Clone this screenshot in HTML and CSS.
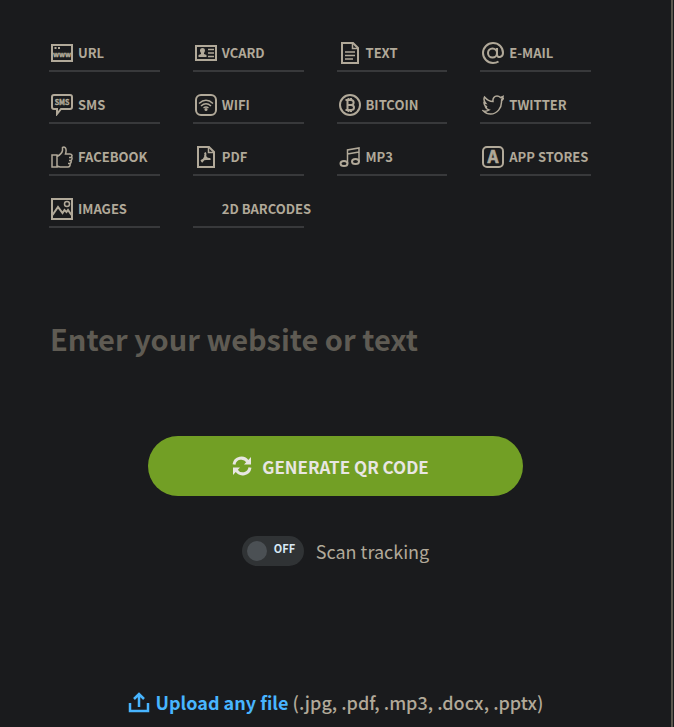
FILE: index.html
```html
<!DOCTYPE html>
<html lang="en">
<head>
  <meta charset="UTF-8">
  <meta name="viewport" content="width=device-width, initial-scale=1.0">
  <title>QR Code Generator</title>
  <link rel="stylesheet" href="styles.css">
</head>
<body>
  <main class="generator">
    <nav class="types">
      <a href="#url" class="type">
        <svg class="icon" viewBox="0 0 22 22"><path d="M1 3h20v16H1z"/><path d="M3.500 6h2M7 6h2"/><text x="11" y="15" class="icon-text www">www</text></svg>
        URL
      </a>
      <a href="#vcard" class="type">
        <svg class="icon" viewBox="0 0 22 22"><path d="M1 4h20v14H1z"/><path class="thin" d="M13 7.500h6M13 11h6M13 14.500h6"/><path class="solid" d="M7.500 6c3 0 3 3.500 1.500 5v1l2.500 1v2h-8v-2l2.500-1v-1c-1.500-1.500-1.500-5 1.500-5z"/></svg>
        VCARD
      </a>
      <a href="#text" class="type">
        <svg class="icon" viewBox="0 0 22 22"><path d="M3 1h11l5 5v15H3z"/><path class="thin" d="M13.500 1v5.500H19M6 10h10M6 13.500h10M6 17h8"/></svg>
        TEXT
      </a>
      <a href="#email" class="type">
        <svg class="icon" viewBox="0 0 22 22"><circle cx="10.500" cy="11" r="4.500"/><path d="M15 6v6.500c0 4 6 3 6-1.500 0-6-4.500-10-10-10S1 5.500 1 11s4.500 10 10 10c2.500 0 4-.500 5.500-1.500"/></svg>
        E-MAIL
      </a>
      <a href="#sms" class="type">
        <svg class="icon" viewBox="0 0 22 22"><path d="M3 1h16q2 0 2 2v10q0 2-2 2H10l-4 5v-5H3q-2 0-2-2V3q0-2 2-2z"/><text x="11" y="11" class="icon-text sms">SMS</text></svg>
        SMS
      </a>
      <a href="#wifi" class="type">
        <svg class="icon" viewBox="0 0 22 22"><rect x="1" y="1" width="20" height="20" rx="5"/><path class="thin" d="M4 9.500q7-6.500 14 0M6 12q5-4.500 10 0M8.500 14q2.500-2 5 0"/><circle class="solid" cx="11" cy="15.500" r="1.500"/></svg>
        WIFI
      </a>
      <a href="#bitcoin" class="type">
        <svg class="icon" viewBox="0 0 22 22"><circle cx="11" cy="11" r="10"/><path d="M6.500 6H12c3.500 0 3.500 5 0 5H8.500M12 11c4 0 4 5 0 5H6.500M8.500 6v10M9.500 4v2M12 4v2M9.500 16v2M12 16v2"/></svg>
        BITCOIN
      </a>
      <a href="#twitter" class="type">
        <svg class="icon" viewBox="0 0 22 22"><path class="thin" d="M1.500 17c2 .500 4 0 5.500-1-2-.500-3-1.500-3.500-3h1.500c-2-1-3-2.500-3-4.500l1.500.500C2 7 1.500 5 2.500 3 5 6 8 7.500 11 7.500 10.500 4 12.500 2 15 2c1.500 0 2.500.500 3.500 1.500L21 2.500l-1 2.500 1.500-.500L19.500 7C20 14 15 20 8.500 20c-3 0-5-1-7-3z"/></svg>
        TWITTER
      </a>
      <a href="#facebook" class="type">
        <svg class="icon" viewBox="0 0 22 22"><path class="thin" d="M1 9h5v12H1zM6 10.500c4-2 5-3.500 5.500-6V1.500c3-1.500 4.500 1.500 3 6.500H19c2 0 2.500 2 1.500 3 1 1 .500 3-.500 3.500.500 1.500 0 2.500-1 3 .500 2-.500 3.500-2 3.500H9l-3-1M18 11.500h2M18 14.500h2M17 17.500h2"/></svg>
        FACEBOOK
      </a>
      <a href="#pdf" class="type">
        <svg class="icon" viewBox="0 0 22 22"><path d="M3 1h11l5 5v15H3z"/><path class="thin" d="M13.500 1v5.500H19"/><path d="M10 6.500c1.500 3-1 7-3.500 9.500M10 9c.500 3 2.500 4.500 5.500 4M6 15c2-1.500 5-2.500 9-2"/></svg>
        PDF
      </a>
      <a href="#mp3" class="type">
        <svg class="icon" viewBox="0 0 22 22"><ellipse cx="5" cy="17.500" rx="3.500" ry="2.500"/><ellipse cx="16.500" cy="15.500" rx="3.500" ry="2.500"/><path class="thin" d="M8.500 17.500V4L20 2v13.500M8.500 8L20 6"/></svg>
        MP3
      </a>
      <a href="#appstores" class="type">
        <svg class="icon" viewBox="0 0 22 22"><rect x="1" y="1" width="20" height="20" rx="4"/><text x="11" y="17" class="icon-text app">A</text></svg>
        APP STORES
      </a>
      <a href="#images" class="type">
        <svg class="icon" viewBox="0 0 22 22"><path d="M1 1h20v20H1z"/><path d="M1.500 17L7 9l4.500 6 2-3 2 2 1.500-2 3.500 5"/><circle class="thin" cx="16" cy="6" r="2.500"/></svg>
        IMAGES
      </a>
      <a href="#barcodes" class="type">
        <span class="icon"></span>
        2D BARCODES
      </a>
    </nav>

    <form class="qr-form">
      <input type="text" class="qr-input" placeholder="Enter your website or text" aria-label="Website or text">

      <button type="button" class="generate">
        <svg class="refresh" viewBox="0 0 20 20"><path d="M2 8.500C3 1.500 12 0 15.500 5.500M18 11.500C17 18.500 8 20 4.500 14.500"/><path class="head" d="M19 1v7.500h-7zM1 19v-7.500h7z"/></svg>
        GENERATE QR CODE
      </button>

      <label class="tracking">
        <span class="switch">
          <input type="checkbox" class="switch-input">
          <span class="switch-state">OFF</span>
        </span>
        Scan tracking
      </label>
    </form>

    <p class="upload">
      <a href="#upload" class="upload-link">
        <svg class="upload-icon" viewBox="0 0 22 22"><path d="M2 12v8h18v-8M11 16V3M6 8l5-5 5 5"/></svg>
        Upload any file
      </a>
      <span>(.jpg, .pdf, .mp3, .docx, .pptx)</span>
    </p>
  </main>
</body>
</html>
```

FILE: styles.css
```css
* {
  box-sizing: border-box;
}
body {
  margin: 0;
  background-color: #1a1b1d;
  color: #b1a999;
  font-family: "Noto Sans CJK SC", "Noto Sans", sans-serif;
}
.generator {
  min-height: 100vh;
  margin-right: 1px;
  padding-top: 41px;
  border-right: 2px solid #5c574e;
}
.types {
  display: grid;
  grid-template-columns: repeat(4, minmax(0, 1fr));
  gap: 21px 33px;
  padding: 0 80px 0 49px;
}
.type {
  display: flex;
  align-items: center;
  gap: 5px;
  height: 31px;
  padding: 0 0 5px 2px;
  border-bottom: 2px solid #38393b;
  color: inherit;
  font-size: 13px;
  font-weight: bold;
  line-height: 24px;
  text-decoration: none;
  white-space: nowrap;
}
.icon {
  flex: none;
  width: 22px;
  height: 22px;
  fill: none;
  stroke: currentColor;
  stroke-width: 2;
}
.icon .thin {
  stroke-width: 1.5;
}
.icon .solid,
.icon-text {
  fill: currentColor;
  stroke: none;
}
.icon-text {
  font-weight: bold;
  text-anchor: middle;
}
.www {
  font-size: 7px;
  stroke: currentColor;
  stroke-width: 0.4;
}
.sms {
  font-size: 7px;
  stroke: currentColor;
  stroke-width: 0.4;
}
.app {
  font-size: 17px;
  stroke: currentColor;
  stroke-width: 0.6;
}
.qr-form {
  display: flex;
  flex-direction: column;
  align-items: center;
  padding: 80px 49px 0;
}
.qr-input {
  width: 100%;
  height: 60px;
  padding: 0 1px;
  border: none;
  outline: none;
  background: none;
  color: #b1a999;
  font: bold 29px "Noto Sans CJK SC", "Noto Sans", sans-serif;
}
.qr-input::placeholder {
  color: #5f5b53;
  opacity: 1;
}
.generate {
  display: flex;
  align-items: center;
  justify-content: center;
  gap: 10px;
  width: 100%;
  max-width: 375px;
  height: 60px;
  margin-top: 68px;
  padding: 0 10px 0 0;
  border: none;
  border-radius: 30px;
  background-color: #729f25;
  color: #e8e6e3;
  font: bold 17px "Noto Sans CJK SC", "Noto Sans", sans-serif;
  cursor: pointer;
}
.refresh {
  width: 20px;
  height: 20px;
  fill: none;
  stroke: currentColor;
  stroke-width: 3;
}
.refresh .head {
  fill: currentColor;
  stroke: none;
}
.tracking {
  display: flex;
  align-items: center;
  gap: 12px;
  margin-top: 40px;
  font-size: 18px;
  line-height: 30px;
}
.switch {
  display: flex;
  align-items: center;
  gap: 7px;
  width: 62px;
  height: 30px;
  padding-left: 5px;
  border-radius: 15px;
  background-color: #303335;
}
.switch-input {
  appearance: none;
  width: 20px;
  height: 20px;
  margin: 0;
  border-radius: 50%;
  background-color: #4b5054;
}
.switch-state {
  padding-bottom: 6px;
  color: #d8eaf5;
  font-size: 11px;
  font-weight: bold;
  line-height: 24px;
}
.upload {
  display: flex;
  align-items: center;
  justify-content: center;
  gap: 4px;
  margin: 121px 0 0;
  font-size: 18px;
  font-weight: 500;
  line-height: 30px;
}
.upload-link {
  display: flex;
  align-items: center;
  gap: 6px;
  color: #48b5ff;
  font-weight: bold;
  text-decoration: none;
}
.upload-icon {
  width: 22px;
  height: 22px;
  fill: none;
  stroke: currentColor;
  stroke-width: 2.5;
}
```
